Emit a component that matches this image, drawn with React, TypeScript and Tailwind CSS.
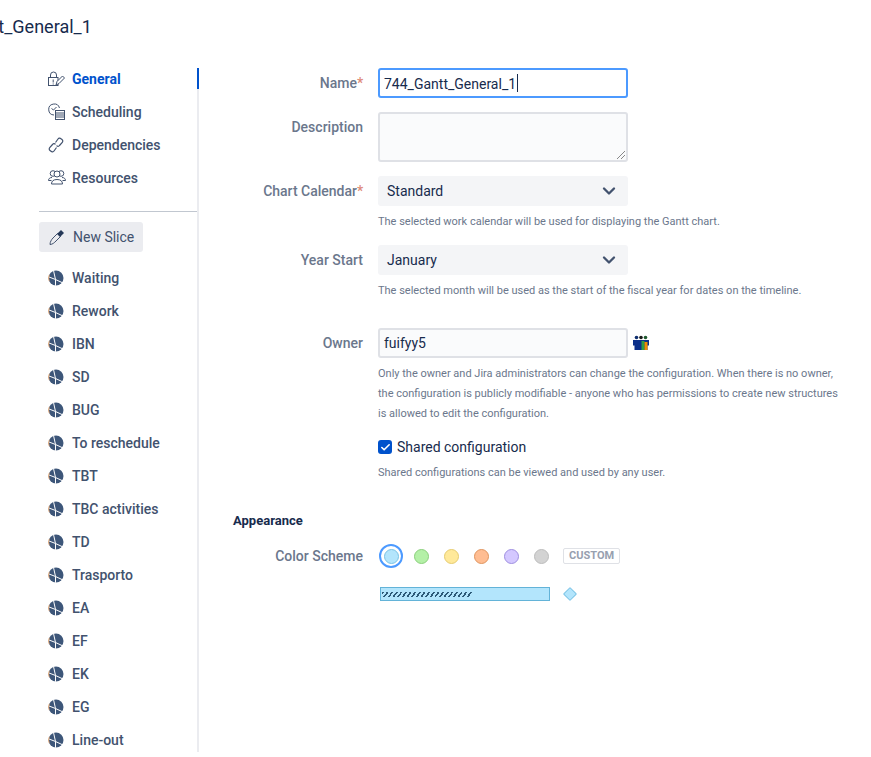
import React from "react";
import { ChevronDown, Check } from "lucide-react";

const slices = ["Waiting", "Rework", "IBN", "SD", "BUG", "To reschedule", "TBT", "TBC activities", "TD", "Trasporto", "EA", "EF", "EK", "EG", "Line-out"];

const schemes = [
  "bg-[#b3e5fc] border-[#79c3e6]",
  "bg-[#b4f0a7] border-[#8bd07c]",
  "bg-[#ffe99a] border-[#e6cc70]",
  "bg-[#ffbd92] border-[#e0955f]",
  "bg-[#d4c8ff] border-[#9f8fe0]",
  "bg-[#d3d3d3] border-[#bdbdbd]",
];

const PieIcon = () => (
  <svg width="16" height="16" viewBox="0 0 16 16" className="shrink-0">
    <circle cx="8" cy="8" r="7.5" fill="#3d5679" />
    <path d="M0.500 6.800L7.500 9.500L7.500 15.800M7.500 9.500L15 13M7.500 9.500L5.500 0.500" stroke="#fff" strokeWidth="1" fill="none" />
    <path d="M1.300 4.800A7.500 7.500 0 0 0 1.300 11.200" stroke="#eda566" strokeWidth="0.8" fill="none" />
  </svg>
);

const GeneralIcon = () => (
  <svg width="17" height="16" viewBox="0 0 17 16" fill="none" stroke="#42526e" strokeWidth="1" className="shrink-0">
    <rect x="0.500" y="6.500" width="9.500" height="8" />
    <path d="M2.500 6.500V4a3 3 0 0 1 6 0v2.500" />
    <path d="M5.200 8.500v3M5.200 12.500v1" />
    <path d="M8 14l1-3.500 5.500-5.500 2 2L11 12.500z" fill="#fff" />
  </svg>
);

const SchedulingIcon = () => (
  <svg width="17" height="17" viewBox="0 0 17 17" fill="none" stroke="#42526e" strokeWidth="1" className="shrink-0">
    <path d="M6 12A5.500 5.500 0 1 1 11.500 5" />
    <path d="M3.500 5.500l2 1.500 3-3" />
    <rect x="7.500" y="7.500" width="9" height="9" fill="#fff" />
    <path d="M7.500 10h9M7.500 12h9M7.500 14h9" />
  </svg>
);

const LinkIcon = () => (
  <svg width="16" height="16" viewBox="0 0 16 16" fill="none" stroke="#42526e" strokeWidth="1.200" className="shrink-0">
    <path d="M7.500 5.500l2.500-3.500a2 2 0 0 1 3-.3l1 .8a2 2 0 0 1 .3 2.900L11.500 8.500a2 2 0 0 1-3 .2" />
    <path d="M8.500 10.500L6 14a2 2 0 0 1-3 .3l-1-.8a2 2 0 0 1-.3-2.900L4.500 7.500a2 2 0 0 1 3-.2" />
  </svg>
);

const PeopleIcon = () => (
  <svg width="18" height="15" viewBox="0 0 18 15" fill="none" stroke="#42526e" strokeWidth="1" className="shrink-0">
    <circle cx="5" cy="3.500" r="2.800" />
    <circle cx="13" cy="3.500" r="2.800" />
    <circle cx="9" cy="4" r="3" fill="#fff" />
    <path d="M.500 10.500c0-2 1.500-3 3.500-3M17.500 10.500c0-2-1.500-3-3.500-3M.500 10.500h3M14.500 10.500h3" />
    <path d="M3.500 14c0-3 2-4.500 5.500-4.500s5.500 1.500 5.500 4.500z" fill="#fff" />
  </svg>
);

const PenIcon = () => (
  <svg width="16" height="16" viewBox="0 0 16 16" className="shrink-0">
    <path d="M1 15.500c0-2.500 1.500-5 3-6.500l4.500-4.500 3 3L7 12c-1.500 1.500-3.500 3.500-6 3.500z" fill="none" stroke="#42526e" strokeWidth="1" />
    <path d="M8 5l4-4 3 3-4 4z" fill="#253858" />
  </svg>
);

const OwnerIcon = () => (
  <svg width="16" height="16" viewBox="0 0 16 16" className="shrink-0">
    <circle cx="3.500" cy="2.500" r="1.800" fill="#0f2f6e" />
    <circle cx="8" cy="2.500" r="1.800" fill="#1a1a1a" />
    <circle cx="12.500" cy="2.500" r="1.800" fill="#1f5a30" />
    <path d="M0 5h16v5.500h-1.500V15H1.500v-4.500H0z" fill="#0b2f8a" />
    <rect x="8.500" y="6" width="3" height="9" fill="#2f9e44" />
    <rect x="11.500" y="7" width="3" height="8" fill="#f08c00" />
  </svg>
);

const Label = ({ children, required }: { children: React.ReactNode; required?: boolean }) => (
  <div className="w-[150px] shrink-0 text-right text-[14px] font-medium leading-[20px] text-[#6b778c]">
    {children}
    {required && <span className="inline-block w-[6px] text-left text-[#de8a78]">*</span>}
  </div>
);

const Help = ({ children }: { children: React.ReactNode }) => (
  <p className="translate-y-px text-[11px] leading-[20px] text-[#6b778c]">{children}</p>
);

const SelectBox = ({ value }: { value: string }) => (
  <div className="flex h-[30px] w-[250px] items-center justify-between rounded-[3px] bg-[#f4f5f7] px-[9px] text-[14px] text-[#172b4d]">
    <span>{value}</span>
    <ChevronDown size={20} strokeWidth={2.8} className="text-[#42526e]" />
  </div>
);

const NavItem = ({ icon, label, active }: { icon: React.ReactNode; label: string; active?: boolean }) => (
  <div className="flex h-[21px] items-center pl-[48px] text-[14px]">
    <div className="w-[24px] shrink-0">{icon}</div>
    <span className={`translate-y-px ${active ? "font-bold text-[#0052cc]" : "font-medium text-[#42526e]"}`}>{label}</span>
  </div>
);

export default function App() {
  return (
    <div className="h-[757px] w-[871px] overflow-hidden bg-white font-['Roboto',sans-serif] text-[#172b4d]">
      <h1 className="-ml-[78px] h-[68px] pt-[13px] text-[18px] font-normal leading-[28px] text-[#172b4d]">744_Gantt_General_1</h1>

      <div className="flex items-start">
        <aside className="relative h-[684px] w-[199px] shrink-0 border-r-2 border-[#ebecf0]">
          <div className="absolute -right-[2px] top-0 h-[21px] w-[2px] bg-[#0052cc]" />
          <div className="flex flex-col gap-[12px]">
            <NavItem icon={<GeneralIcon />} label="General" active />
            <NavItem icon={<SchedulingIcon />} label="Scheduling" />
            <NavItem icon={<LinkIcon />} label="Dependencies" />
            <NavItem icon={<PeopleIcon />} label="Resources" />
          </div>
          <div className="ml-[39px] mt-[23px] border-t border-[#c1c7d0]" />
          <div className="ml-[39px] mt-[10px] flex h-[30px] w-[104px] items-center gap-[8px] rounded-[3px] bg-[#ebecf0] pl-[10px] text-[14px] text-[#42526e]">
            <PenIcon />
            <span>New Slice</span>
          </div>
          <div className="mt-[15px] flex flex-col gap-[12px]">
            {slices.map((s) => (
              <NavItem key={s} icon={<PieIcon />} label={s} />
            ))}
          </div>
        </aside>

        <main className="w-[640px] pl-[14px]">
          <div className="flex items-center gap-[15px]">
            <Label required>Name</Label>
            <div className="flex h-[30px] w-[250px] items-center rounded-[3px] border-2 border-[#4c9aff] bg-white px-[4px] text-[14px] text-[#172b4d]">
              <span className="translate-y-px">744_Gantt_General_1</span>
              <span className="ml-px h-[18px] w-px bg-[#172b4d]" />
            </div>
          </div>

          <div className="mt-[14px] flex items-start gap-[15px]">
            <div className="pt-[5px]"><Label>Description</Label></div>
            <div className="relative h-[50px] w-[250px] rounded-[3px] border-2 border-[#dfe1e6] bg-[#fafbfc]">
              <svg width="10" height="10" viewBox="0 0 10 10" className="absolute bottom-0 right-0" stroke="#6b6b6b" strokeWidth="0.8">
                <path d="M1 9L9 1M5 9L9 5" />
              </svg>
            </div>
          </div>

          <div className="mt-[14px] flex items-center gap-[15px]">
            <Label required>Chart Calendar</Label>
            <SelectBox value="Standard" />
          </div>
          <div className="ml-[165px] mt-[5px]">
            <Help>The selected work calendar will be used for displaying the Gantt chart.</Help>
          </div>

          <div className="mt-[14px] flex items-center gap-[15px]">
            <Label>Year Start</Label>
            <SelectBox value="January" />
          </div>
          <div className="ml-[165px] mt-[5px]">
            <Help>The selected month will be used as the start of the fiscal year for dates on the timeline.</Help>
          </div>

          <div className="mt-[28px] flex items-center gap-[15px]">
            <Label>Owner</Label>
            <div className="flex h-[30px] w-[250px] items-center rounded-[3px] border-2 border-[#dfe1e6] bg-[#fafbfc] px-[4px] text-[14px] text-[#172b4d]">
              <span>fuifyy5</span>
            </div>
            <div className="-ml-[10px]"><OwnerIcon /></div>
          </div>
          <div className="ml-[165px] mt-[5px] w-[465px]">
            <Help>Only the owner and Jira administrators can change the configuration. When there is no owner, the configuration is publicly modifiable - anyone who has permissions to create new structures is allowed to edit the configuration.</Help>
          </div>

          <div className="ml-[165px] mt-[14px] flex h-[20px] items-center gap-[5px]">
            <span className="flex h-[14px] w-[14px] items-center justify-center rounded-[3px] bg-[#0052cc]">
              <Check size={11} strokeWidth={3.5} className="text-white" />
            </span>
            <span className="text-[14px] text-[#172b4d]">Shared configuration</span>
          </div>
          <div className="ml-[165px] mt-[5px]">
            <Help>Shared configurations can be viewed and used by any user.</Help>
          </div>

          <h2 className="ml-[20px] mt-[29px] text-[13px] font-bold leading-[20px] text-[#172b4d]">Appearance</h2>

          <div className="mt-[15px] flex h-[20px] items-center gap-[15px]">
            <Label>Color Scheme</Label>
            <div className="flex items-center gap-[14px] pl-[5px]">
              {schemes.map((c, i) => (
                <div key={c} className="relative flex h-[16px] w-[16px] items-center justify-center">
                  {i === 0 && <span className="absolute -inset-[4px] rounded-full border-2 border-[#4c9aff]" />}
                  <span className={`h-[15px] w-[15px] rounded-full border ${c}`} />
                </div>
              ))}
              <span className="rounded-[2px] border border-[#dfe1e6] px-[5px] text-[11px] font-bold leading-[14px] text-[#97a0af]">CUSTOM</span>
            </div>
          </div>

          <div className="ml-[167px] mt-[21px] flex items-center gap-[15px]">
            <div className="flex h-[14px] w-[170px] items-center border border-[#63b3d8] bg-[#b3e5fc] pl-px">
              <div className="h-[5px] w-[90px] bg-[repeating-linear-gradient(125deg,#2d5a78_0px,#2d5a78_1.600px,transparent_1.600px,transparent_3.800px)]" />
            </div>
            <div className="h-[10px] w-[10px] rotate-45 rounded-[1px] border border-[#79c3e6] bg-[#b3e5fc]" />
          </div>
        </main>
      </div>
    </div>
  );
}
